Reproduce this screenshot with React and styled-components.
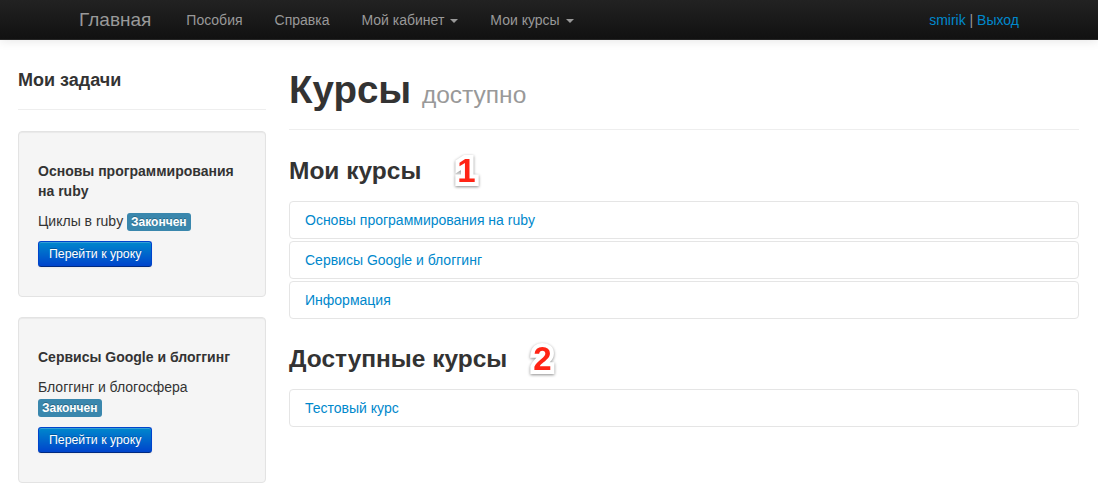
import React from "react";
import styled, { createGlobalStyle } from "styled-components";

const Global = createGlobalStyle`
  html, body { margin: 0; padding: 0; background: #fff; }
  body {
    font-family: "Liberation Sans", Arial, Helvetica, sans-serif;
    font-size: 14px;
    line-height: 20px;
    color: #333;
  }
  * { box-sizing: border-box; }
`;

const Navbar = styled.div`
  height: 40px;
  background: linear-gradient(to bottom, #222222, #111111);
  border-bottom: 1px solid #252525;
  box-shadow: 0 1px 10px rgba(0, 0, 0, 0.1);
`;

const NavInner = styled.div`
  width: 940px;
  margin: 0 auto;
  height: 40px;
  display: flex;
  align-items: center;
`;

const Brand = styled.a`
  display: block;
  padding: 10px 19px 10px 20px;
  margin-left: -20px;
  font-size: 19px;
  line-height: 20px;
  color: #999;
  text-decoration: none;
`;

const NavList = styled.ul`
  display: flex;
  list-style: none;
  margin: 0;
  padding: 0;
`;

const NavLink = styled.a`
  display: flex;
  align-items: center;
  padding: 10px 16px;
  font-size: 14px;
  line-height: 20px;
  color: #999;
  text-decoration: none;
`;

const Caret = styled.span`
  display: inline-block;
  width: 0;
  height: 0;
  margin-left: 6px;
  margin-top: 1px;
  border-top: 4px solid #999;
  border-left: 4px solid transparent;
  border-right: 4px solid transparent;
`;

const NavText = styled.p`
  margin: 0 0 0 auto;
  font-size: 14px;
  line-height: 20px;
  color: #999;
`;

const BlueLink = styled.a`
  color: #0088cc;
  text-decoration: none;
`;

const Page = styled.div`
  display: flex;
  gap: 23px;
  padding: 30px 19px 0 18px;
`;

const Sidebar = styled.div`
  width: 248px;
  flex: none;
`;

const SideHeader = styled.h4`
  margin: 0 0 21px;
  padding-bottom: 19px;
  border-bottom: 1px solid #eee;
  font-size: 18px;
  line-height: 20px;
  font-weight: bold;
  color: #333;
`;

const Well = styled.div`
  background: #f5f5f5;
  border: 1px solid #e3e3e3;
  border-radius: 4px;
  box-shadow: inset 0 1px 1px rgba(0, 0, 0, 0.05);
  padding: 19px;
  margin-bottom: 20px;
`;

const WellTitle = styled.h5`
  margin: 10px 0;
  font-size: 14px;
  line-height: 20px;
  font-weight: bold;
  color: #333;
`;

const Para = styled.p`
  margin: 0 0 10px;
`;

const Label = styled.span`
  display: inline-block;
  padding: 2px 4px;
  font-size: 12px;
  font-weight: bold;
  line-height: 14px;
  color: #fff;
  text-shadow: 0 -1px 0 rgba(0, 0, 0, 0.25);
  background-color: #3a87ad;
  border-radius: 3px;
  vertical-align: baseline;
  white-space: nowrap;
`;

const Button = styled.a`
  display: inline-block;
  padding: 2px 10px;
  font-size: 12.3px;
  line-height: 20px;
  color: #fff;
  text-decoration: none;
  text-shadow: 0 -1px 0 rgba(0, 0, 0, 0.25);
  background: linear-gradient(to bottom, #0088cc, #0044cc);
  border: 1px solid #0044cc;
  border-bottom-color: #002a80;
  border-radius: 3px;
  box-shadow: inset 0 1px 0 rgba(255, 255, 255, 0.2), 0 1px 2px rgba(0, 0, 0, 0.05);
`;

const Main = styled.div`
  flex: 1;
  min-width: 0;
`;

const PageHeader = styled.h1`
  margin: 0 0 21px;
  padding-bottom: 19px;
  border-bottom: 1px solid #eee;
  font-size: 38.5px;
  line-height: 40px;
  height: 60px;
  font-weight: bold;
  color: #333;
`;

const Small = styled.small`
  font-size: 24.5px;
  line-height: 0;
  font-weight: normal;
  color: #999;
`;

const SectionTitle = styled.h3`
  display: flex;
  align-items: center;
  margin: 0 0 10px;
  font-size: 24.5px;
  line-height: 40px;
  font-weight: bold;
  color: #333;
`;

const Marker = styled.span`
  margin-left: ${(p) => p.$offset}px;
  font-size: 33px;
  line-height: 40px;
  font-weight: bold;
  color: #ff2415;
  -webkit-text-stroke: 8px #fff;
  paint-order: stroke fill;
  filter: drop-shadow(0 1px 1.5px rgba(0, 0, 0, 0.45));
`;

const CourseList = styled.div`
  display: flex;
  flex-direction: column;
  gap: 2px;
  margin-bottom: 20px;
`;

const CourseItem = styled.div`
  border: 1px solid #e5e5e5;
  border-radius: 4px;
  padding: 8px 15px;
  line-height: 20px;
`;

const tasks = [
  { title: "Основы программирования на ruby", lesson: "Циклы в ruby" },
  { title: "Сервисы Google и блоггинг", lesson: "Блоггинг и блогосфера" },
];

const myCourses = [
  "Основы программирования на ruby",
  "Сервисы Google и блоггинг",
  "Информация",
];

const available = ["Тестовый курс"];

export default function App() {
  return (
    <>
      <Global />
      <Navbar>
        <NavInner>
          <Brand href="#">Главная</Brand>
          <NavList>
            <li><NavLink href="#">Пособия</NavLink></li>
            <li><NavLink href="#">Справка</NavLink></li>
            <li><NavLink href="#">Мой кабинет<Caret /></NavLink></li>
            <li><NavLink href="#">Мои курсы<Caret /></NavLink></li>
          </NavList>
          <NavText>
            <BlueLink href="#">smirik</BlueLink> | <BlueLink href="#">Выход</BlueLink>
          </NavText>
        </NavInner>
      </Navbar>
      <Page>
        <Sidebar>
          <SideHeader>Мои задачи</SideHeader>
          {tasks.map((t) => (
            <Well key={t.title}>
              <WellTitle>{t.title}</WellTitle>
              <Para>
                {t.lesson} <Label>Закончен</Label>
              </Para>
              <Para>
                <Button href="#">Перейти к уроку</Button>
              </Para>
            </Well>
          ))}
        </Sidebar>
        <Main>
          <PageHeader>
            Курсы <Small>доступно</Small>
          </PageHeader>
          <SectionTitle>
            Мои курсы<Marker $offset={36}>1</Marker>
          </SectionTitle>
          <CourseList>
            {myCourses.map((c) => (
              <CourseItem key={c}>
                <BlueLink href="#">{c}</BlueLink>
              </CourseItem>
            ))}
          </CourseList>
          <SectionTitle>
            Доступные курсы<Marker $offset={26}>2</Marker>
          </SectionTitle>
          <CourseList>
            {available.map((c) => (
              <CourseItem key={c}>
                <BlueLink href="#">{c}</BlueLink>
              </CourseItem>
            ))}
          </CourseList>
        </Main>
      </Page>
    </>
  );
}
